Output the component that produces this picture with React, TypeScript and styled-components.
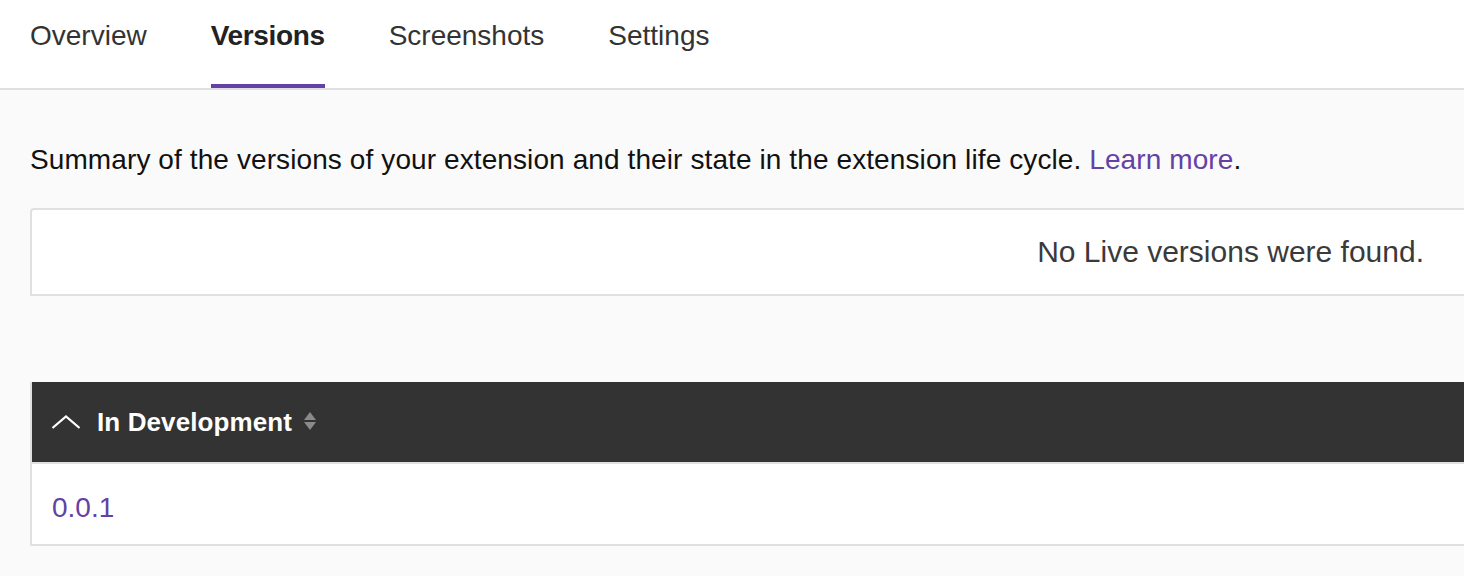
import React from "react";
import styled, { createGlobalStyle } from "styled-components";

const GlobalStyle = createGlobalStyle`
  html, body {
    margin: 0;
    padding: 0;
    background: #fafafa;
    overflow: hidden;
  }
  body {
    font-family: "Liberation Sans", Arial, Helvetica, sans-serif;
  }
`;

const Page = styled.div`
  width: 1464px;
  min-height: 576px;
  background: #fafafa;
`;

const TabBar = styled.nav`
  display: flex;
  gap: 64px;
  padding-left: 30px;
  background: #ffffff;
  border-bottom: 2px solid #e0e0e0;
`;

const Tab = styled.a<{ $active?: boolean }>`
  display: block;
  padding: 20px 0 32px;
  font-size: 28px;
  line-height: 32px;
  color: ${(p) => (p.$active ? "#222222" : "#333333")};
  font-weight: ${(p) => (p.$active ? 700 : 400)};
  letter-spacing: ${(p) => (p.$active ? "-0.35px" : "0")};
  border-bottom: 4px solid ${(p) => (p.$active ? "#6441a4" : "transparent")};
  cursor: pointer;
`;

const Main = styled.main`
  padding: 54px 0 0 30px;
`;

const Summary = styled.p`
  margin: 0;
  font-size: 28px;
  line-height: 32px;
  letter-spacing: 0.1px;
  color: #111111;
`;

const Link = styled.a`
  color: #6441a4;
  text-decoration: none;
`;

const EmptyBox = styled.div`
  margin-top: 32px;
  height: 84px;
  display: flex;
  align-items: center;
  justify-content: flex-end;
  padding-right: 40px;
  background: #ffffff;
  border: 2px solid #e0e0e0;
  border-right: none;
  border-top-left-radius: 4px;
  font-size: 30px;
  color: #3a3a3a;
`;

const Table = styled.section`
  margin-top: 86px;
  border-left: 2px solid #e0e0e0;
  border-bottom: 2px solid #e0e0e0;
  background: #ffffff;
`;

const TableHeader = styled.div`
  height: 80px;
  display: flex;
  align-items: center;
  padding-left: 20px;
  background: #333333;
  border-bottom: 2px solid #e0e0e0;
  color: #ffffff;
`;

const HeaderTitle = styled.span`
  margin-left: 17px;
  font-size: 26px;
  font-weight: 700;
  line-height: 32px;
  letter-spacing: 0.1px;
`;

const SortIcon = styled.svg`
  margin-left: 12px;
  margin-top: -2px;
`;

const Row = styled.div`
  height: 80px;
  padding: 28px 20px 0;
  box-sizing: border-box;
  font-size: 28px;
  line-height: 32px;
`;

const Chevron = () => (
  <svg width="28" height="14" viewBox="0 0 28 14">
    <polyline
      points="0.5,13 14,1.5 27.5,13"
      fill="none"
      stroke="#ffffff"
      strokeWidth="2.2"
    />
  </svg>
);

const Sort = () => (
  <SortIcon width="12" height="18" viewBox="0 0 12 18">
    <polygon points="6,0 12,8 0,8" fill="#8a8a8a" />
    <polygon points="0,10 12,10 6,18" fill="#8a8a8a" />
  </SortIcon>
);

export default function App() {
  return (
    <Page>
      <GlobalStyle />
      <TabBar>
        <Tab>Overview</Tab>
        <Tab $active>Versions</Tab>
        <Tab>Screenshots</Tab>
        <Tab>Settings</Tab>
      </TabBar>
      <Main>
        <Summary>
          Summary of the versions of your extension and their state in the
          extension life cycle. <Link>Learn more</Link>.
        </Summary>
        <EmptyBox>No Live versions were found.</EmptyBox>
        <Table>
          <TableHeader>
            <Chevron />
            <HeaderTitle>In Development</HeaderTitle>
            <Sort />
          </TableHeader>
          <Row>
            <Link>0.0.1</Link>
          </Row>
        </Table>
      </Main>
    </Page>
  );
}
